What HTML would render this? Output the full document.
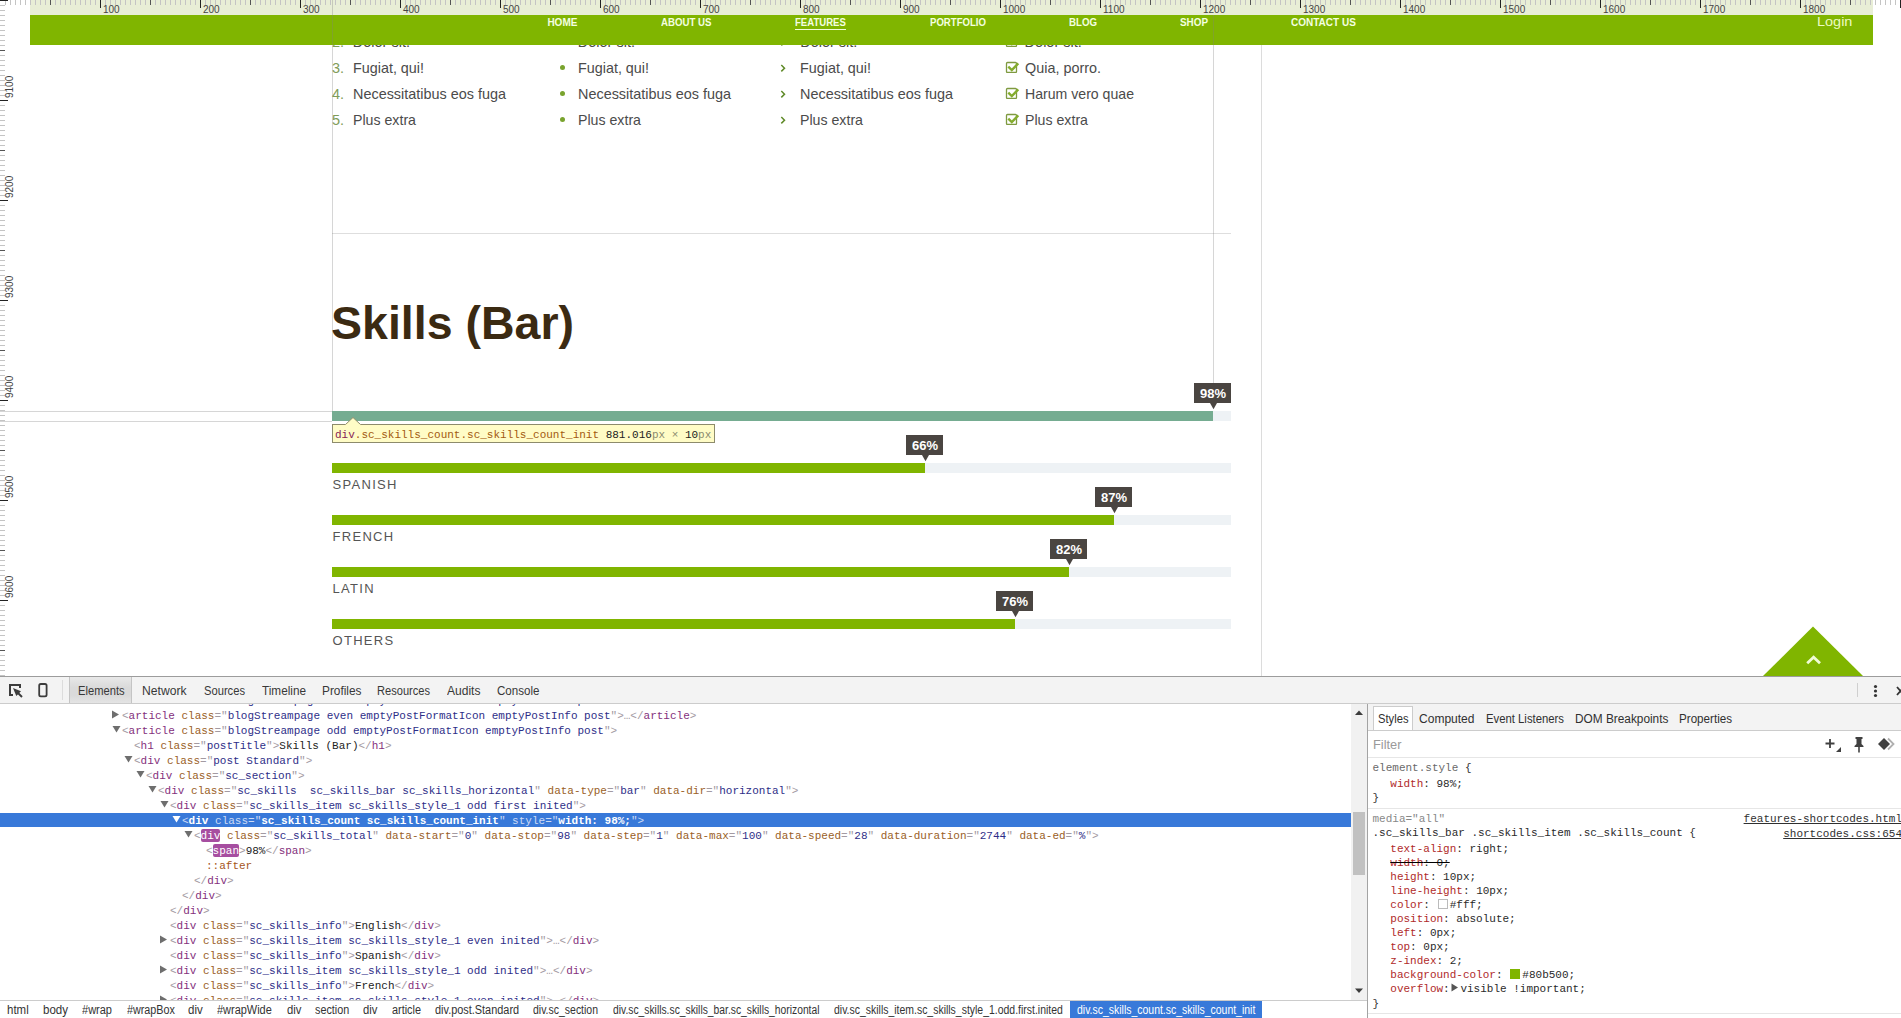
<!DOCTYPE html>
<html><head><meta charset="utf-8"><title>Skills (Bar)</title>
<style>
html,body{margin:0;padding:0}
body{width:1901px;height:1018px;overflow:hidden;position:relative;background:#fff;font-family:"Liberation Sans",sans-serif}
.t{position:absolute;white-space:pre;line-height:normal;transform-origin:0 0}
</style></head><body>
<div style="position:absolute;left:1261px;top:0px;width:1px;height:676px;background:#dcdcdc;"></div>
<div style="position:absolute;left:332px;top:233px;width:899px;height:1px;background:#dedede;"></div>
<div class="t" style="left:332.00px;top:34.00px;font:14.5px 'Liberation Sans', sans-serif;color:#7f9c58;">2.</div>
<div class="t" style="left:352.80px;top:34.00px;font:14.5px 'Liberation Sans', sans-serif;color:#4b4b4b;">Dolor sit.</div>
<div style="position:absolute;left:560px;top:38.5px;width:5px;height:5px;border-radius:50%;background:#79a32e"></div>
<div class="t" style="left:577.80px;top:34.00px;font:14.5px 'Liberation Sans', sans-serif;color:#4b4b4b;">Dolor sit.</div>
<svg style="position:absolute;left:779px;top:38px" width="8" height="10"><path d="M2.3 1 L5.5 4.2 L2.3 7.4" stroke="#5f8a28" stroke-width="1.5" fill="none"/></svg>
<div class="t" style="left:800.20px;top:34.00px;font:14.5px 'Liberation Sans', sans-serif;color:#4b4b4b;">Dolor sit.</div>
<svg style="position:absolute;left:1005px;top:35px" width="15" height="12"><rect x="1.5" y="1.5" width="10" height="10" rx="1" stroke="#7f9a40" stroke-width="1.3" fill="none"/><path d="M3.3 5.6 L6.8 9 L13.3 2.4" stroke="#84ac2e" stroke-width="2.4" fill="none"/></svg>
<div class="t" style="left:1024.60px;top:34.00px;font:14.5px 'Liberation Sans', sans-serif;color:#4b4b4b;">Dolor sit.</div>
<div class="t" style="left:332.00px;top:60.00px;font:14.5px 'Liberation Sans', sans-serif;color:#7f9c58;">3.</div>
<div class="t" style="left:352.80px;top:60.00px;font:14.5px 'Liberation Sans', sans-serif;transform:scaleX(0.9895);color:#4b4b4b;">Fugiat, qui!</div>
<div style="position:absolute;left:560px;top:64.5px;width:5px;height:5px;border-radius:50%;background:#79a32e"></div>
<div class="t" style="left:577.80px;top:60.00px;font:14.5px 'Liberation Sans', sans-serif;transform:scaleX(0.9895);color:#4b4b4b;">Fugiat, qui!</div>
<svg style="position:absolute;left:779px;top:64px" width="8" height="10"><path d="M2.3 1 L5.5 4.2 L2.3 7.4" stroke="#5f8a28" stroke-width="1.5" fill="none"/></svg>
<div class="t" style="left:800.20px;top:60.00px;font:14.5px 'Liberation Sans', sans-serif;transform:scaleX(0.9895);color:#4b4b4b;">Fugiat, qui!</div>
<svg style="position:absolute;left:1005px;top:61px" width="15" height="12"><rect x="1.5" y="1.5" width="10" height="10" rx="1" stroke="#7f9a40" stroke-width="1.3" fill="none"/><path d="M3.3 5.6 L6.8 9 L13.3 2.4" stroke="#84ac2e" stroke-width="2.4" fill="none"/></svg>
<div class="t" style="left:1024.60px;top:60.00px;font:14.5px 'Liberation Sans', sans-serif;transform:scaleX(0.9925);color:#4b4b4b;">Quia, porro.</div>
<div class="t" style="left:332.00px;top:86.00px;font:14.5px 'Liberation Sans', sans-serif;color:#7f9c58;">4.</div>
<div class="t" style="left:352.80px;top:86.00px;font:14.5px 'Liberation Sans', sans-serif;transform:scaleX(0.9938);color:#4b4b4b;">Necessitatibus eos fuga</div>
<div style="position:absolute;left:560px;top:90.5px;width:5px;height:5px;border-radius:50%;background:#79a32e"></div>
<div class="t" style="left:577.80px;top:86.00px;font:14.5px 'Liberation Sans', sans-serif;transform:scaleX(0.9938);color:#4b4b4b;">Necessitatibus eos fuga</div>
<svg style="position:absolute;left:779px;top:90px" width="8" height="10"><path d="M2.3 1 L5.5 4.2 L2.3 7.4" stroke="#5f8a28" stroke-width="1.5" fill="none"/></svg>
<div class="t" style="left:800.20px;top:86.00px;font:14.5px 'Liberation Sans', sans-serif;transform:scaleX(0.9938);color:#4b4b4b;">Necessitatibus eos fuga</div>
<svg style="position:absolute;left:1005px;top:87px" width="15" height="12"><rect x="1.5" y="1.5" width="10" height="10" rx="1" stroke="#7f9a40" stroke-width="1.3" fill="none"/><path d="M3.3 5.6 L6.8 9 L13.3 2.4" stroke="#84ac2e" stroke-width="2.4" fill="none"/></svg>
<div class="t" style="left:1024.60px;top:86.00px;font:14.5px 'Liberation Sans', sans-serif;transform:scaleX(0.9729);color:#4b4b4b;">Harum vero quae</div>
<div class="t" style="left:332.00px;top:112.00px;font:14.5px 'Liberation Sans', sans-serif;color:#7f9c58;">5.</div>
<div class="t" style="left:352.80px;top:112.00px;font:14.5px 'Liberation Sans', sans-serif;transform:scaleX(0.9770);color:#4b4b4b;">Plus extra</div>
<div style="position:absolute;left:560px;top:116.5px;width:5px;height:5px;border-radius:50%;background:#79a32e"></div>
<div class="t" style="left:577.80px;top:112.00px;font:14.5px 'Liberation Sans', sans-serif;transform:scaleX(0.9770);color:#4b4b4b;">Plus extra</div>
<svg style="position:absolute;left:779px;top:116px" width="8" height="10"><path d="M2.3 1 L5.5 4.2 L2.3 7.4" stroke="#5f8a28" stroke-width="1.5" fill="none"/></svg>
<div class="t" style="left:800.20px;top:112.00px;font:14.5px 'Liberation Sans', sans-serif;transform:scaleX(0.9770);color:#4b4b4b;">Plus extra</div>
<svg style="position:absolute;left:1005px;top:113px" width="15" height="12"><rect x="1.5" y="1.5" width="10" height="10" rx="1" stroke="#7f9a40" stroke-width="1.3" fill="none"/><path d="M3.3 5.6 L6.8 9 L13.3 2.4" stroke="#84ac2e" stroke-width="2.4" fill="none"/></svg>
<div class="t" style="left:1024.60px;top:112.00px;font:14.5px 'Liberation Sans', sans-serif;transform:scaleX(0.9770);color:#4b4b4b;">Plus extra</div>
<div class="t" style="left:331.30px;top:295.50px;font:bold 46.5px 'Liberation Sans', sans-serif;transform:scaleX(1.0003);color:#3b2a12;">Skills (Bar)</div>
<div style="position:absolute;left:332px;top:411px;width:899px;height:10px;background:#eef2f5;"></div>
<div style="position:absolute;left:332px;top:411px;width:881.02px;height:10px;background:#75ac91;"></div>
<div style="position:absolute;left:1193.52px;top:383px;width:37px;height:20px;background:#4a4541;"></div>
<svg style="position:absolute;left:1208.52px;top:403px" width="9" height="7"><path d="M1 0 L8 0 L4.5 6.3 Z" fill="#4a4541"/></svg>
<div class="t" style="left:1200.02px;top:386.00px;font:bold 13px 'Liberation Sans', sans-serif;transform:scaleX(0.9988);color:#ffffff;">98%</div>
<div style="position:absolute;left:332px;top:463px;width:899px;height:10px;background:#eef2f5;"></div>
<div style="position:absolute;left:332px;top:463px;width:593.34px;height:10px;background:#80b500;"></div>
<div style="position:absolute;left:905.84px;top:435px;width:37px;height:20px;background:#4a4541;"></div>
<svg style="position:absolute;left:920.84px;top:455px" width="9" height="7"><path d="M1 0 L8 0 L4.5 6.3 Z" fill="#4a4541"/></svg>
<div class="t" style="left:912.34px;top:438.00px;font:bold 13px 'Liberation Sans', sans-serif;transform:scaleX(0.9988);color:#ffffff;">66%</div>
<div class="t" style="left:332.50px;top:476.70px;font:13px 'Liberation Sans', sans-serif;letter-spacing:1.3px;color:#555555;">SPANISH</div>
<div style="position:absolute;left:332px;top:515px;width:899px;height:10px;background:#eef2f5;"></div>
<div style="position:absolute;left:332px;top:515px;width:782.13px;height:10px;background:#80b500;"></div>
<div style="position:absolute;left:1094.63px;top:487px;width:37px;height:20px;background:#4a4541;"></div>
<svg style="position:absolute;left:1109.63px;top:507px" width="9" height="7"><path d="M1 0 L8 0 L4.5 6.3 Z" fill="#4a4541"/></svg>
<div class="t" style="left:1101.13px;top:490.00px;font:bold 13px 'Liberation Sans', sans-serif;transform:scaleX(0.9988);color:#ffffff;">87%</div>
<div class="t" style="left:332.50px;top:528.70px;font:13px 'Liberation Sans', sans-serif;letter-spacing:1.3px;color:#555555;">FRENCH</div>
<div style="position:absolute;left:332px;top:567px;width:899px;height:10px;background:#eef2f5;"></div>
<div style="position:absolute;left:332px;top:567px;width:737.18px;height:10px;background:#80b500;"></div>
<div style="position:absolute;left:1049.6799999999998px;top:539px;width:37px;height:20px;background:#4a4541;"></div>
<svg style="position:absolute;left:1064.6799999999998px;top:559px" width="9" height="7"><path d="M1 0 L8 0 L4.5 6.3 Z" fill="#4a4541"/></svg>
<div class="t" style="left:1056.18px;top:542.00px;font:bold 13px 'Liberation Sans', sans-serif;transform:scaleX(0.9988);color:#ffffff;">82%</div>
<div class="t" style="left:332.50px;top:580.70px;font:13px 'Liberation Sans', sans-serif;letter-spacing:1.3px;color:#555555;">LATIN</div>
<div style="position:absolute;left:332px;top:619px;width:899px;height:10px;background:#eef2f5;"></div>
<div style="position:absolute;left:332px;top:619px;width:683.24px;height:10px;background:#80b500;"></div>
<div style="position:absolute;left:995.74px;top:591px;width:37px;height:20px;background:#4a4541;"></div>
<svg style="position:absolute;left:1010.74px;top:611px" width="9" height="7"><path d="M1 0 L8 0 L4.5 6.3 Z" fill="#4a4541"/></svg>
<div class="t" style="left:1002.24px;top:594.00px;font:bold 13px 'Liberation Sans', sans-serif;transform:scaleX(0.9988);color:#ffffff;">76%</div>
<div class="t" style="left:332.50px;top:632.70px;font:13px 'Liberation Sans', sans-serif;letter-spacing:1.3px;color:#555555;">OTHERS</div>
<svg style="position:absolute;left:1763px;top:626px" width="100" height="50"><path d="M0 50 L50 0.5 L100 50 Z" fill="#80b500"/><path d="M44.2 37.2 L50.6 31.2 L57 37.2" stroke="#f0fcd6" stroke-width="2.8" fill="none"/></svg>
<div style="position:absolute;left:30px;top:0px;width:1843px;height:45px;background:#80b500;"></div>
<div class="t" style="left:547.40px;top:17.00px;font:bold 10px 'Liberation Sans', sans-serif;transform:scaleX(1.0000);color:#f4ffe0;">HOME</div>
<div class="t" style="left:661.00px;top:17.00px;font:bold 10px 'Liberation Sans', sans-serif;transform:scaleX(0.9668);color:#f4ffe0;">ABOUT US</div>
<div class="t" style="left:795.30px;top:17.00px;font:bold 10px 'Liberation Sans', sans-serif;transform:scaleX(0.9557);color:#f4ffe0;">FEATURES</div>
<div class="t" style="left:929.80px;top:17.00px;font:bold 10px 'Liberation Sans', sans-serif;transform:scaleX(0.9598);color:#f4ffe0;">PORTFOLIO</div>
<div class="t" style="left:1069.00px;top:17.00px;font:bold 10px 'Liberation Sans', sans-serif;transform:scaleX(0.9692);color:#f4ffe0;">BLOG</div>
<div class="t" style="left:1180.00px;top:17.00px;font:bold 10px 'Liberation Sans', sans-serif;transform:scaleX(0.9879);color:#f4ffe0;">SHOP</div>
<div class="t" style="left:1291.00px;top:17.00px;font:bold 10px 'Liberation Sans', sans-serif;transform:scaleX(0.9998);color:#f4ffe0;">CONTACT US</div>
<div style="position:absolute;left:795.3px;top:29px;width:50.8px;height:1px;background:#f0fcd8;"></div>
<div class="t" style="left:1816.80px;top:13.80px;font:13px 'Liberation Sans', sans-serif;transform:scaleX(1.1128);color:#ecfbc0;">Login</div>
<div style="position:absolute;left:30px;top:0px;width:1843px;height:15px;background:#e8eed6;"></div>
<svg width="1901" height="676" style="position:absolute;left:0;top:0"><path d="M5.5 0v5M10.5 0v5M15.5 0v5M20.5 0v5M25.5 0v5M30.5 0v5M35.5 0v5M40.5 0v5M45.5 0v5M55.5 0v5M60.5 0v5M65.5 0v5M70.5 0v5M75.5 0v5M80.5 0v5M85.5 0v5M90.5 0v5M95.5 0v5M105.5 0v5M110.5 0v5M115.5 0v5M120.5 0v5M125.5 0v5M130.5 0v5M135.5 0v5M140.5 0v5M145.5 0v5M155.5 0v5M160.5 0v5M165.5 0v5M170.5 0v5M175.5 0v5M180.5 0v5M185.5 0v5M190.5 0v5M195.5 0v5M205.5 0v5M210.5 0v5M215.5 0v5M220.5 0v5M225.5 0v5M230.5 0v5M235.5 0v5M240.5 0v5M245.5 0v5M255.5 0v5M260.5 0v5M265.5 0v5M270.5 0v5M275.5 0v5M280.5 0v5M285.5 0v5M290.5 0v5M295.5 0v5M305.5 0v5M310.5 0v5M315.5 0v5M320.5 0v5M325.5 0v5M330.5 0v5M335.5 0v5M340.5 0v5M345.5 0v5M355.5 0v5M360.5 0v5M365.5 0v5M370.5 0v5M375.5 0v5M380.5 0v5M385.5 0v5M390.5 0v5M395.5 0v5M405.5 0v5M410.5 0v5M415.5 0v5M420.5 0v5M425.5 0v5M430.5 0v5M435.5 0v5M440.5 0v5M445.5 0v5M455.5 0v5M460.5 0v5M465.5 0v5M470.5 0v5M475.5 0v5M480.5 0v5M485.5 0v5M490.5 0v5M495.5 0v5M505.5 0v5M510.5 0v5M515.5 0v5M520.5 0v5M525.5 0v5M530.5 0v5M535.5 0v5M540.5 0v5M545.5 0v5M555.5 0v5M560.5 0v5M565.5 0v5M570.5 0v5M575.5 0v5M580.5 0v5M585.5 0v5M590.5 0v5M595.5 0v5M605.5 0v5M610.5 0v5M615.5 0v5M620.5 0v5M625.5 0v5M630.5 0v5M635.5 0v5M640.5 0v5M645.5 0v5M655.5 0v5M660.5 0v5M665.5 0v5M670.5 0v5M675.5 0v5M680.5 0v5M685.5 0v5M690.5 0v5M695.5 0v5M705.5 0v5M710.5 0v5M715.5 0v5M720.5 0v5M725.5 0v5M730.5 0v5M735.5 0v5M740.5 0v5M745.5 0v5M755.5 0v5M760.5 0v5M765.5 0v5M770.5 0v5M775.5 0v5M780.5 0v5M785.5 0v5M790.5 0v5M795.5 0v5M805.5 0v5M810.5 0v5M815.5 0v5M820.5 0v5M825.5 0v5M830.5 0v5M835.5 0v5M840.5 0v5M845.5 0v5M855.5 0v5M860.5 0v5M865.5 0v5M870.5 0v5M875.5 0v5M880.5 0v5M885.5 0v5M890.5 0v5M895.5 0v5M905.5 0v5M910.5 0v5M915.5 0v5M920.5 0v5M925.5 0v5M930.5 0v5M935.5 0v5M940.5 0v5M945.5 0v5M955.5 0v5M960.5 0v5M965.5 0v5M970.5 0v5M975.5 0v5M980.5 0v5M985.5 0v5M990.5 0v5M995.5 0v5M1005.5 0v5M1010.5 0v5M1015.5 0v5M1020.5 0v5M1025.5 0v5M1030.5 0v5M1035.5 0v5M1040.5 0v5M1045.5 0v5M1055.5 0v5M1060.5 0v5M1065.5 0v5M1070.5 0v5M1075.5 0v5M1080.5 0v5M1085.5 0v5M1090.5 0v5M1095.5 0v5M1105.5 0v5M1110.5 0v5M1115.5 0v5M1120.5 0v5M1125.5 0v5M1130.5 0v5M1135.5 0v5M1140.5 0v5M1145.5 0v5M1155.5 0v5M1160.5 0v5M1165.5 0v5M1170.5 0v5M1175.5 0v5M1180.5 0v5M1185.5 0v5M1190.5 0v5M1195.5 0v5M1205.5 0v5M1210.5 0v5M1215.5 0v5M1220.5 0v5M1225.5 0v5M1230.5 0v5M1235.5 0v5M1240.5 0v5M1245.5 0v5M1255.5 0v5M1260.5 0v5M1265.5 0v5M1270.5 0v5M1275.5 0v5M1280.5 0v5M1285.5 0v5M1290.5 0v5M1295.5 0v5M1305.5 0v5M1310.5 0v5M1315.5 0v5M1320.5 0v5M1325.5 0v5M1330.5 0v5M1335.5 0v5M1340.5 0v5M1345.5 0v5M1355.5 0v5M1360.5 0v5M1365.5 0v5M1370.5 0v5M1375.5 0v5M1380.5 0v5M1385.5 0v5M1390.5 0v5M1395.5 0v5M1405.5 0v5M1410.5 0v5M1415.5 0v5M1420.5 0v5M1425.5 0v5M1430.5 0v5M1435.5 0v5M1440.5 0v5M1445.5 0v5M1455.5 0v5M1460.5 0v5M1465.5 0v5M1470.5 0v5M1475.5 0v5M1480.5 0v5M1485.5 0v5M1490.5 0v5M1495.5 0v5M1505.5 0v5M1510.5 0v5M1515.5 0v5M1520.5 0v5M1525.5 0v5M1530.5 0v5M1535.5 0v5M1540.5 0v5M1545.5 0v5M1555.5 0v5M1560.5 0v5M1565.5 0v5M1570.5 0v5M1575.5 0v5M1580.5 0v5M1585.5 0v5M1590.5 0v5M1595.5 0v5M1605.5 0v5M1610.5 0v5M1615.5 0v5M1620.5 0v5M1625.5 0v5M1630.5 0v5M1635.5 0v5M1640.5 0v5M1645.5 0v5M1655.5 0v5M1660.5 0v5M1665.5 0v5M1670.5 0v5M1675.5 0v5M1680.5 0v5M1685.5 0v5M1690.5 0v5M1695.5 0v5M1705.5 0v5M1710.5 0v5M1715.5 0v5M1720.5 0v5M1725.5 0v5M1730.5 0v5M1735.5 0v5M1740.5 0v5M1745.5 0v5M1755.5 0v5M1760.5 0v5M1765.5 0v5M1770.5 0v5M1775.5 0v5M1780.5 0v5M1785.5 0v5M1790.5 0v5M1795.5 0v5M1805.5 0v5M1810.5 0v5M1815.5 0v5M1820.5 0v5M1825.5 0v5M1830.5 0v5M1835.5 0v5M1840.5 0v5M1845.5 0v5M1855.5 0v5M1860.5 0v5M1865.5 0v5M1870.5 0v5M1875.5 0v5M1880.5 0v5M1885.5 0v5M1890.5 0v5M1895.5 0v5M0 5.5h5M0 10.5h5M0 15.5h5M0 20.5h5M0 25.5h5M0 30.5h5M0 35.5h5M0 40.5h5M0 45.5h5M0 55.5h5M0 60.5h5M0 65.5h5M0 70.5h5M0 75.5h5M0 80.5h5M0 85.5h5M0 90.5h5M0 95.5h5M0 105.5h5M0 110.5h5M0 115.5h5M0 120.5h5M0 125.5h5M0 130.5h5M0 135.5h5M0 140.5h5M0 145.5h5M0 155.5h5M0 160.5h5M0 165.5h5M0 170.5h5M0 175.5h5M0 180.5h5M0 185.5h5M0 190.5h5M0 195.5h5M0 205.5h5M0 210.5h5M0 215.5h5M0 220.5h5M0 225.5h5M0 230.5h5M0 235.5h5M0 240.5h5M0 245.5h5M0 255.5h5M0 260.5h5M0 265.5h5M0 270.5h5M0 275.5h5M0 280.5h5M0 285.5h5M0 290.5h5M0 295.5h5M0 305.5h5M0 310.5h5M0 315.5h5M0 320.5h5M0 325.5h5M0 330.5h5M0 335.5h5M0 340.5h5M0 345.5h5M0 355.5h5M0 360.5h5M0 365.5h5M0 370.5h5M0 375.5h5M0 380.5h5M0 385.5h5M0 390.5h5M0 395.5h5M0 405.5h5M0 410.5h5M0 415.5h5M0 420.5h5M0 425.5h5M0 430.5h5M0 435.5h5M0 440.5h5M0 445.5h5M0 455.5h5M0 460.5h5M0 465.5h5M0 470.5h5M0 475.5h5M0 480.5h5M0 485.5h5M0 490.5h5M0 495.5h5M0 505.5h5M0 510.5h5M0 515.5h5M0 520.5h5M0 525.5h5M0 530.5h5M0 535.5h5M0 540.5h5M0 545.5h5M0 555.5h5M0 560.5h5M0 565.5h5M0 570.5h5M0 575.5h5M0 580.5h5M0 585.5h5M0 590.5h5M0 595.5h5M0 605.5h5M0 610.5h5M0 615.5h5M0 620.5h5M0 625.5h5M0 630.5h5M0 635.5h5M0 640.5h5M0 645.5h5M0 655.5h5M0 660.5h5M0 665.5h5M0 670.5h5M0 675.5h5" stroke="#c4c4c4" stroke-width="1"/><path d="M50.5 0v5M150.5 0v5M250.5 0v5M350.5 0v5M450.5 0v5M550.5 0v5M650.5 0v5M750.5 0v5M850.5 0v5M950.5 0v5M1050.5 0v5M1150.5 0v5M1250.5 0v5M1350.5 0v5M1450.5 0v5M1550.5 0v5M1650.5 0v5M1750.5 0v5M1850.5 0v5M0 50.5h5M0 150.5h5M0 250.5h5M0 350.5h5M0 450.5h5M0 550.5h5M0 650.5h5" stroke="#555" stroke-width="1"/><path d="M100.5 0v8M200.5 0v8M300.5 0v8M400.5 0v8M500.5 0v8M600.5 0v8M700.5 0v8M800.5 0v8M900.5 0v8M1000.5 0v8M1100.5 0v8M1200.5 0v8M1300.5 0v8M1400.5 0v8M1500.5 0v8M1600.5 0v8M1700.5 0v8M1800.5 0v8M1900.5 0v8M0 0.5h8M0 100.5h8M0 200.5h8M0 300.5h8M0 400.5h8M0 500.5h8M0 600.5h8" stroke="#222" stroke-width="1"/><g style="font-family:'Liberation Sans',sans-serif;font-size:10px" fill="#444"><text x="103" y="13.3">100</text><text x="203" y="13.3">200</text><text x="303" y="13.3">300</text><text x="403" y="13.3">400</text><text x="503" y="13.3">500</text><text x="603" y="13.3">600</text><text x="703" y="13.3">700</text><text x="803" y="13.3">800</text><text x="903" y="13.3">900</text><text x="1003" y="13.3">1000</text><text x="1103" y="13.3">1100</text><text x="1203" y="13.3">1200</text><text x="1303" y="13.3">1300</text><text x="1403" y="13.3">1400</text><text x="1503" y="13.3">1500</text><text x="1603" y="13.3">1600</text><text x="1703" y="13.3">1700</text><text x="1803" y="13.3">1800</text><text x="1903" y="13.3">1900</text><text transform="translate(13,98) rotate(-90)">9100</text><text transform="translate(13,198) rotate(-90)">9200</text><text transform="translate(13,298) rotate(-90)">9300</text><text transform="translate(13,398) rotate(-90)">9400</text><text transform="translate(13,498) rotate(-90)">9500</text><text transform="translate(13,598) rotate(-90)">9600</text></g></svg>
<div style="position:absolute;left:332px;top:0px;width:1px;height:411px;background:rgba(128,128,128,0.32);"></div>
<div style="position:absolute;left:1213px;top:15px;width:1px;height:368px;background:rgba(128,128,128,0.32);"></div>
<div style="position:absolute;left:0px;top:411px;width:332px;height:1px;background:rgba(128,128,128,0.32);"></div>
<div style="position:absolute;left:0px;top:421px;width:332px;height:1px;background:rgba(128,128,128,0.32);"></div>
<div style="position:absolute;left:332px;top:424px;width:381px;height:17px;background:#fffcc6;border:1px solid #8d8b6c"></div>
<svg style="position:absolute;left:345px;top:416px" width="16" height="10"><path d="M0 9 L8 1.5 L16 9" fill="#fffcc6" stroke="#8d8b6c" stroke-width="1"/><rect x="0.5" y="8.5" width="15" height="2" fill="#fffcc6"/></svg>
<div class="t" style="left:335.00px;top:428.50px;font:11px 'Liberation Mono', monospace;"><span style="color:#882255">div</span><span style="color:#a25a10">.sc_skills_count.sc_skills_count_init</span><span style="color:#222"> 881.016</span><span style="color:#8a8a6e">px</span><span style="color:#8a8a6e"> × </span><span style="color:#222">10</span><span style="color:#8a8a6e">px</span></div>
<div style="position:absolute;left:0px;top:676px;width:1901px;height:342px;background:#ffffff;"></div>
<div style="position:absolute;left:0px;top:676px;width:1901px;height:1px;background:#9c9c9c;"></div>
<div style="position:absolute;left:0px;top:677px;width:1901px;height:26px;background:#f3f3f3;"></div>
<div style="position:absolute;left:0px;top:703px;width:1901px;height:1px;background:#cccccc;"></div>
<svg style="position:absolute;left:8px;top:683px" width="18" height="17"><path d="M12 5 V2 H2 V12 H5" stroke="#3c3c3c" stroke-width="2" fill="none"/><path d="M5 5 L13 8.3 L8.3 13 Z" fill="#3c3c3c"/><path d="M9.5 9.5 L14 14" stroke="#3c3c3c" stroke-width="1.9"/></svg>
<svg style="position:absolute;left:37px;top:682px" width="12" height="16"><rect x="2.2" y="2" width="7.4" height="12.4" rx="1.6" stroke="#3c3c3c" stroke-width="1.8" fill="none"/></svg>
<div style="position:absolute;left:62px;top:680px;width:1px;height:20px;background:#dcdcdc;"></div>
<div style="position:absolute;left:69px;top:677px;width:63px;height:26px;background:linear-gradient(#e8e8e8,#dadada 40%,#dadada 70%,#e4e4e4);border-left:1px solid #c4c4c4;border-right:1px solid #c4c4c4;box-sizing:border-box"></div>
<div class="t" style="left:77.80px;top:684.00px;font:12px 'Liberation Sans', sans-serif;transform:scaleX(0.9314);color:#383838;">Elements</div>
<div class="t" style="left:141.50px;top:684.00px;font:12px 'Liberation Sans', sans-serif;transform:scaleX(1.0110);color:#383838;">Network</div>
<div class="t" style="left:203.50px;top:684.00px;font:12px 'Liberation Sans', sans-serif;transform:scaleX(0.9312);color:#383838;">Sources</div>
<div class="t" style="left:262.00px;top:684.00px;font:12px 'Liberation Sans', sans-serif;transform:scaleX(0.9798);color:#383838;">Timeline</div>
<div class="t" style="left:322.00px;top:684.00px;font:12px 'Liberation Sans', sans-serif;transform:scaleX(0.9871);color:#383838;">Profiles</div>
<div class="t" style="left:377.00px;top:684.00px;font:12px 'Liberation Sans', sans-serif;transform:scaleX(0.9240);color:#383838;">Resources</div>
<div class="t" style="left:447.00px;top:684.00px;font:12px 'Liberation Sans', sans-serif;transform:scaleX(1.0042);color:#383838;">Audits</div>
<div class="t" style="left:497.00px;top:684.00px;font:12px 'Liberation Sans', sans-serif;transform:scaleX(0.9652);color:#383838;">Console</div>
<div style="position:absolute;left:1857px;top:683px;width:1px;height:14px;background:#cfcfcf;"></div>
<svg style="position:absolute;left:1872px;top:684px" width="8" height="14"><circle cx="3.5" cy="2.5" r="1.6" fill="#333"/><circle cx="3.5" cy="7" r="1.6" fill="#333"/><circle cx="3.5" cy="11.5" r="1.6" fill="#333"/></svg>
<svg style="position:absolute;left:1895px;top:685px" width="10" height="12"><path d="M2 2 L9 10 M9 2 L2 10" stroke="#333" stroke-width="1.8"/></svg>
<div style="position:absolute;left:0;top:704px;width:1351px;height:296px;overflow:hidden">
<div style="position:absolute;left:0px;top:109px;width:1351px;height:14px;background:#3879d9;"></div>
<svg style="position:absolute;left:112px;top:-9px" width="8" height="9"><path d="M0 0.5 L7 4.5 L0 8.5Z" fill="#6e6e6e"/></svg>
<div class="t" style="left:122.00px;top:-9.00px;font:11px 'Liberation Mono', monospace;"><span style="color:#a39aa2">&lt;</span><span style="color:#84307c">article</span><span style="color:#a39aa2"> </span><span style="color:#9a6026">class</span><span style="color:#a39aa2">=&quot;</span><span style="color:#2e2e88">blogStreampage odd emptyPostFormatIcon emptyPostInfo post</span><span style="color:#a39aa2">&quot;</span><span style="color:#a39aa2">&gt;</span><span style="color:#a39aa2">…</span><span style="color:#a39aa2">&lt;/</span><span style="color:#84307c">article</span><span style="color:#a39aa2">&gt;</span></div>
<svg style="position:absolute;left:112px;top:6px" width="8" height="9"><path d="M0 0.5 L7 4.5 L0 8.5Z" fill="#6e6e6e"/></svg>
<div class="t" style="left:122.00px;top:6.00px;font:11px 'Liberation Mono', monospace;"><span style="color:#a39aa2">&lt;</span><span style="color:#84307c">article</span><span style="color:#a39aa2"> </span><span style="color:#9a6026">class</span><span style="color:#a39aa2">=&quot;</span><span style="color:#2e2e88">blogStreampage even emptyPostFormatIcon emptyPostInfo post</span><span style="color:#a39aa2">&quot;</span><span style="color:#a39aa2">&gt;</span><span style="color:#a39aa2">…</span><span style="color:#a39aa2">&lt;/</span><span style="color:#84307c">article</span><span style="color:#a39aa2">&gt;</span></div>
<svg style="position:absolute;left:111.5px;top:22px" width="9" height="7"><path d="M0.5 0 L8.5 0 L4.5 6.5Z" fill="#6e6e6e"/></svg>
<div class="t" style="left:122.00px;top:21.00px;font:11px 'Liberation Mono', monospace;"><span style="color:#a39aa2">&lt;</span><span style="color:#84307c">article</span><span style="color:#a39aa2"> </span><span style="color:#9a6026">class</span><span style="color:#a39aa2">=&quot;</span><span style="color:#2e2e88">blogStreampage odd emptyPostFormatIcon emptyPostInfo post</span><span style="color:#a39aa2">&quot;</span><span style="color:#a39aa2">&gt;</span></div>
<div class="t" style="left:134.00px;top:36.00px;font:11px 'Liberation Mono', monospace;"><span style="color:#a39aa2">&lt;</span><span style="color:#84307c">h1</span><span style="color:#a39aa2"> </span><span style="color:#9a6026">class</span><span style="color:#a39aa2">=&quot;</span><span style="color:#2e2e88">postTitle</span><span style="color:#a39aa2">&quot;</span><span style="color:#a39aa2">&gt;</span><span style="color:#222222">Skills (Bar)</span><span style="color:#a39aa2">&lt;/</span><span style="color:#84307c">h1</span><span style="color:#a39aa2">&gt;</span></div>
<svg style="position:absolute;left:123.5px;top:52px" width="9" height="7"><path d="M0.5 0 L8.5 0 L4.5 6.5Z" fill="#6e6e6e"/></svg>
<div class="t" style="left:134.00px;top:51.00px;font:11px 'Liberation Mono', monospace;"><span style="color:#a39aa2">&lt;</span><span style="color:#84307c">div</span><span style="color:#a39aa2"> </span><span style="color:#9a6026">class</span><span style="color:#a39aa2">=&quot;</span><span style="color:#2e2e88">post Standard</span><span style="color:#a39aa2">&quot;</span><span style="color:#a39aa2">&gt;</span></div>
<svg style="position:absolute;left:135.5px;top:67px" width="9" height="7"><path d="M0.5 0 L8.5 0 L4.5 6.5Z" fill="#6e6e6e"/></svg>
<div class="t" style="left:146.00px;top:66.00px;font:11px 'Liberation Mono', monospace;"><span style="color:#a39aa2">&lt;</span><span style="color:#84307c">div</span><span style="color:#a39aa2"> </span><span style="color:#9a6026">class</span><span style="color:#a39aa2">=&quot;</span><span style="color:#2e2e88">sc_section</span><span style="color:#a39aa2">&quot;</span><span style="color:#a39aa2">&gt;</span></div>
<svg style="position:absolute;left:147.5px;top:82px" width="9" height="7"><path d="M0.5 0 L8.5 0 L4.5 6.5Z" fill="#6e6e6e"/></svg>
<div class="t" style="left:158.00px;top:81.00px;font:11px 'Liberation Mono', monospace;"><span style="color:#a39aa2">&lt;</span><span style="color:#84307c">div</span><span style="color:#a39aa2"> </span><span style="color:#9a6026">class</span><span style="color:#a39aa2">=&quot;</span><span style="color:#2e2e88">sc_skills  sc_skills_bar sc_skills_horizontal</span><span style="color:#a39aa2">&quot;</span><span style="color:#a39aa2"> </span><span style="color:#9a6026">data-type</span><span style="color:#a39aa2">=&quot;</span><span style="color:#2e2e88">bar</span><span style="color:#a39aa2">&quot;</span><span style="color:#a39aa2"> </span><span style="color:#9a6026">data-dir</span><span style="color:#a39aa2">=&quot;</span><span style="color:#2e2e88">horizontal</span><span style="color:#a39aa2">&quot;</span><span style="color:#a39aa2">&gt;</span></div>
<svg style="position:absolute;left:159.5px;top:97px" width="9" height="7"><path d="M0.5 0 L8.5 0 L4.5 6.5Z" fill="#6e6e6e"/></svg>
<div class="t" style="left:170.00px;top:96.00px;font:11px 'Liberation Mono', monospace;"><span style="color:#a39aa2">&lt;</span><span style="color:#84307c">div</span><span style="color:#a39aa2"> </span><span style="color:#9a6026">class</span><span style="color:#a39aa2">=&quot;</span><span style="color:#2e2e88">sc_skills_item sc_skills_style_1 odd first inited</span><span style="color:#a39aa2">&quot;</span><span style="color:#a39aa2">&gt;</span></div>
<svg style="position:absolute;left:171.5px;top:112px" width="9" height="7"><path d="M0.5 0 L8.5 0 L4.5 6.5Z" fill="#ffffff"/></svg>
<div class="t" style="left:182.00px;top:111.00px;font:11px 'Liberation Mono', monospace;"><span style="color:#cddbf5">&lt;</span><span style="color:#ffffff;font-weight:bold">div</span><span style="color:#cddbf5"> </span><span style="color:#cddbf5">class</span><span style="color:#cddbf5">=&quot;</span><span style="color:#ffffff;font-weight:bold">sc_skills_count sc_skills_count_init</span><span style="color:#cddbf5">&quot;</span><span style="color:#cddbf5"> </span><span style="color:#cddbf5">style</span><span style="color:#cddbf5">=&quot;</span><span style="color:#ffffff;font-weight:bold">width: 98%;</span><span style="color:#cddbf5">&quot;</span><span style="color:#cddbf5">&gt;</span></div>
<div style="position:absolute;left:201.2px;top:124.5px;width:19px;height:13.5px;background:#a64ea0;border-radius:2px"></div>
<svg style="position:absolute;left:183.5px;top:127px" width="9" height="7"><path d="M0.5 0 L8.5 0 L4.5 6.5Z" fill="#6e6e6e"/></svg>
<div class="t" style="left:194.00px;top:126.00px;font:11px 'Liberation Mono', monospace;"><span style="color:#a39aa2">&lt;</span><span style="color:#ffffff">div</span><span style="color:#a39aa2"> </span><span style="color:#9a6026">class</span><span style="color:#a39aa2">=&quot;</span><span style="color:#2e2e88">sc_skills_total</span><span style="color:#a39aa2">&quot;</span><span style="color:#a39aa2"> </span><span style="color:#9a6026">data-start</span><span style="color:#a39aa2">=&quot;</span><span style="color:#2e2e88">0</span><span style="color:#a39aa2">&quot;</span><span style="color:#a39aa2"> </span><span style="color:#9a6026">data-stop</span><span style="color:#a39aa2">=&quot;</span><span style="color:#2e2e88">98</span><span style="color:#a39aa2">&quot;</span><span style="color:#a39aa2"> </span><span style="color:#9a6026">data-step</span><span style="color:#a39aa2">=&quot;</span><span style="color:#2e2e88">1</span><span style="color:#a39aa2">&quot;</span><span style="color:#a39aa2"> </span><span style="color:#9a6026">data-max</span><span style="color:#a39aa2">=&quot;</span><span style="color:#2e2e88">100</span><span style="color:#a39aa2">&quot;</span><span style="color:#a39aa2"> </span><span style="color:#9a6026">data-speed</span><span style="color:#a39aa2">=&quot;</span><span style="color:#2e2e88">28</span><span style="color:#a39aa2">&quot;</span><span style="color:#a39aa2"> </span><span style="color:#9a6026">data-duration</span><span style="color:#a39aa2">=&quot;</span><span style="color:#2e2e88">2744</span><span style="color:#a39aa2">&quot;</span><span style="color:#a39aa2"> </span><span style="color:#9a6026">data-ed</span><span style="color:#a39aa2">=&quot;</span><span style="color:#2e2e88">%</span><span style="color:#a39aa2">&quot;</span><span style="color:#a39aa2">&gt;</span></div>
<div style="position:absolute;left:213.2px;top:139.5px;width:25.8px;height:13.5px;background:#a64ea0;border-radius:2px"></div>
<div class="t" style="left:206.00px;top:141.00px;font:11px 'Liberation Mono', monospace;"><span style="color:#a39aa2">&lt;</span><span style="color:#ffffff">span</span><span style="color:#a39aa2">&gt;</span><span style="color:#222222">98%</span><span style="color:#a39aa2">&lt;/</span><span style="color:#84307c">span</span><span style="color:#a39aa2">&gt;</span></div>
<div class="t" style="left:206.00px;top:156.00px;font:11px 'Liberation Mono', monospace;color:#a5561b;">::after</div>
<div class="t" style="left:194.00px;top:171.00px;font:11px 'Liberation Mono', monospace;"><span style="color:#a39aa2">&lt;/</span><span style="color:#84307c">div</span><span style="color:#a39aa2">&gt;</span></div>
<div class="t" style="left:182.00px;top:186.00px;font:11px 'Liberation Mono', monospace;"><span style="color:#a39aa2">&lt;/</span><span style="color:#84307c">div</span><span style="color:#a39aa2">&gt;</span></div>
<div class="t" style="left:170.00px;top:201.00px;font:11px 'Liberation Mono', monospace;"><span style="color:#a39aa2">&lt;/</span><span style="color:#84307c">div</span><span style="color:#a39aa2">&gt;</span></div>
<div class="t" style="left:170.00px;top:216.00px;font:11px 'Liberation Mono', monospace;"><span style="color:#a39aa2">&lt;</span><span style="color:#84307c">div</span><span style="color:#a39aa2"> </span><span style="color:#9a6026">class</span><span style="color:#a39aa2">=&quot;</span><span style="color:#2e2e88">sc_skills_info</span><span style="color:#a39aa2">&quot;</span><span style="color:#a39aa2">&gt;</span><span style="color:#222222">English</span><span style="color:#a39aa2">&lt;/</span><span style="color:#84307c">div</span><span style="color:#a39aa2">&gt;</span></div>
<svg style="position:absolute;left:160px;top:231px" width="8" height="9"><path d="M0 0.5 L7 4.5 L0 8.5Z" fill="#6e6e6e"/></svg>
<div class="t" style="left:170.00px;top:231.00px;font:11px 'Liberation Mono', monospace;"><span style="color:#a39aa2">&lt;</span><span style="color:#84307c">div</span><span style="color:#a39aa2"> </span><span style="color:#9a6026">class</span><span style="color:#a39aa2">=&quot;</span><span style="color:#2e2e88">sc_skills_item sc_skills_style_1 even inited</span><span style="color:#a39aa2">&quot;</span><span style="color:#a39aa2">&gt;</span><span style="color:#a39aa2">…</span><span style="color:#a39aa2">&lt;/</span><span style="color:#84307c">div</span><span style="color:#a39aa2">&gt;</span></div>
<div class="t" style="left:170.00px;top:246.00px;font:11px 'Liberation Mono', monospace;"><span style="color:#a39aa2">&lt;</span><span style="color:#84307c">div</span><span style="color:#a39aa2"> </span><span style="color:#9a6026">class</span><span style="color:#a39aa2">=&quot;</span><span style="color:#2e2e88">sc_skills_info</span><span style="color:#a39aa2">&quot;</span><span style="color:#a39aa2">&gt;</span><span style="color:#222222">Spanish</span><span style="color:#a39aa2">&lt;/</span><span style="color:#84307c">div</span><span style="color:#a39aa2">&gt;</span></div>
<svg style="position:absolute;left:160px;top:261px" width="8" height="9"><path d="M0 0.5 L7 4.5 L0 8.5Z" fill="#6e6e6e"/></svg>
<div class="t" style="left:170.00px;top:261.00px;font:11px 'Liberation Mono', monospace;"><span style="color:#a39aa2">&lt;</span><span style="color:#84307c">div</span><span style="color:#a39aa2"> </span><span style="color:#9a6026">class</span><span style="color:#a39aa2">=&quot;</span><span style="color:#2e2e88">sc_skills_item sc_skills_style_1 odd inited</span><span style="color:#a39aa2">&quot;</span><span style="color:#a39aa2">&gt;</span><span style="color:#a39aa2">…</span><span style="color:#a39aa2">&lt;/</span><span style="color:#84307c">div</span><span style="color:#a39aa2">&gt;</span></div>
<div class="t" style="left:170.00px;top:276.00px;font:11px 'Liberation Mono', monospace;"><span style="color:#a39aa2">&lt;</span><span style="color:#84307c">div</span><span style="color:#a39aa2"> </span><span style="color:#9a6026">class</span><span style="color:#a39aa2">=&quot;</span><span style="color:#2e2e88">sc_skills_info</span><span style="color:#a39aa2">&quot;</span><span style="color:#a39aa2">&gt;</span><span style="color:#222222">French</span><span style="color:#a39aa2">&lt;/</span><span style="color:#84307c">div</span><span style="color:#a39aa2">&gt;</span></div>
<svg style="position:absolute;left:160px;top:291px" width="8" height="9"><path d="M0 0.5 L7 4.5 L0 8.5Z" fill="#6e6e6e"/></svg>
<div class="t" style="left:170.00px;top:291.00px;font:11px 'Liberation Mono', monospace;"><span style="color:#a39aa2">&lt;</span><span style="color:#84307c">div</span><span style="color:#a39aa2"> </span><span style="color:#9a6026">class</span><span style="color:#a39aa2">=&quot;</span><span style="color:#2e2e88">sc_skills_item sc_skills_style_1 even inited</span><span style="color:#a39aa2">&quot;</span><span style="color:#a39aa2">&gt;</span><span style="color:#a39aa2">…</span><span style="color:#a39aa2">&lt;/</span><span style="color:#84307c">div</span><span style="color:#a39aa2">&gt;</span></div>
</div>
<div style="position:absolute;left:1351px;top:704px;width:16px;height:296px;background:#f1f1f1;"></div>
<svg style="position:absolute;left:1354px;top:709px" width="10" height="8"><path d="M1 6 L5 1.5 L9 6Z" fill="#3c3c3c"/></svg>
<svg style="position:absolute;left:1354px;top:987px" width="10" height="8"><path d="M1 1.5 L5 6 L9 1.5Z" fill="#3c3c3c"/></svg>
<div style="position:absolute;left:1353px;top:812px;width:12px;height:63px;background:#c1c1c1;"></div>
<div style="position:absolute;left:1367px;top:704px;width:1px;height:314px;background:#a3a3a3;"></div>
<div style="position:absolute;left:0px;top:1000px;width:1367px;height:1px;background:#cccccc;"></div>
<div style="position:absolute;left:0px;top:1001px;width:1367px;height:17px;background:#ffffff;"></div>
<div style="position:absolute;left:1070px;top:1001px;width:191.5px;height:17px;background:#3879d9;"></div>
<div class="t" style="left:7.00px;top:1003.00px;font:12px 'Liberation Sans', sans-serif;transform:scaleX(0.9571);color:#333333;">html</div>
<div class="t" style="left:42.70px;top:1003.00px;font:12px 'Liberation Sans', sans-serif;transform:scaleX(0.9604);color:#333333;">body</div>
<div class="t" style="left:82.00px;top:1003.00px;font:12px 'Liberation Sans', sans-serif;transform:scaleX(0.9178);color:#333333;">#wrap</div>
<div class="t" style="left:126.50px;top:1003.00px;font:12px 'Liberation Sans', sans-serif;transform:scaleX(0.8974);color:#333333;">#wrapBox</div>
<div class="t" style="left:188.00px;top:1003.00px;font:12px 'Liberation Sans', sans-serif;transform:scaleX(0.9580);color:#333333;">div</div>
<div class="t" style="left:217.00px;top:1003.00px;font:12px 'Liberation Sans', sans-serif;transform:scaleX(0.9129);color:#333333;">#wrapWide</div>
<div class="t" style="left:286.50px;top:1003.00px;font:12px 'Liberation Sans', sans-serif;transform:scaleX(0.9385);color:#333333;">div</div>
<div class="t" style="left:314.50px;top:1003.00px;font:12px 'Liberation Sans', sans-serif;transform:scaleX(0.8993);color:#333333;">section</div>
<div class="t" style="left:363.40px;top:1003.00px;font:12px 'Liberation Sans', sans-serif;transform:scaleX(0.9385);color:#333333;">div</div>
<div class="t" style="left:391.50px;top:1003.00px;font:12px 'Liberation Sans', sans-serif;transform:scaleX(0.9058);color:#333333;">article</div>
<div class="t" style="left:434.90px;top:1003.00px;font:12px 'Liberation Sans', sans-serif;transform:scaleX(0.9090);color:#333333;">div.post.Standard</div>
<div class="t" style="left:533.30px;top:1003.00px;font:12px 'Liberation Sans', sans-serif;transform:scaleX(0.8727);color:#333333;">div.sc_section</div>
<div class="t" style="left:613.00px;top:1003.00px;font:12px 'Liberation Sans', sans-serif;transform:scaleX(0.8585);color:#333333;">div.sc_skills.sc_skills_bar.sc_skills_horizontal</div>
<div class="t" style="left:833.70px;top:1003.00px;font:12px 'Liberation Sans', sans-serif;transform:scaleX(0.8715);color:#333333;">div.sc_skills_item.sc_skills_style_1.odd.first.inited</div>
<div class="t" style="left:1076.70px;top:1003.00px;font:12px 'Liberation Sans', sans-serif;transform:scaleX(0.8717);color:#ffffff;">div.sc_skills_count.sc_skills_count_init</div>
<div style="position:absolute;left:1368px;top:704px;width:533px;height:26px;background:#f3f3f3;"></div>
<div style="position:absolute;left:1368px;top:730px;width:533px;height:1px;background:#cccccc;"></div>
<div style="position:absolute;left:1373px;top:706px;width:40px;height:24px;background:#fff;border:1px solid #cccccc;border-bottom:none;box-sizing:border-box"></div>
<div class="t" style="left:1378.00px;top:712.00px;font:12px 'Liberation Sans', sans-serif;transform:scaleX(0.9331);color:#303030;">Styles</div>
<div class="t" style="left:1419.00px;top:712.00px;font:12px 'Liberation Sans', sans-serif;transform:scaleX(1.0023);color:#303030;">Computed</div>
<div class="t" style="left:1486.00px;top:712.00px;font:12px 'Liberation Sans', sans-serif;transform:scaleX(0.9430);color:#303030;">Event Listeners</div>
<div class="t" style="left:1575.00px;top:712.00px;font:12px 'Liberation Sans', sans-serif;transform:scaleX(0.9862);color:#303030;">DOM Breakpoints</div>
<div class="t" style="left:1679.30px;top:712.00px;font:12px 'Liberation Sans', sans-serif;transform:scaleX(0.9689);color:#303030;">Properties</div>
<div style="position:absolute;left:1368px;top:731px;width:533px;height:26px;background:#ffffff;"></div>
<div class="t" style="left:1372.60px;top:737.60px;font:12px 'Liberation Sans', sans-serif;transform:scaleX(1.0685);color:#9a9a9a;">Filter</div>
<div style="position:absolute;left:1368px;top:757px;width:533px;height:1px;background:#e6e6e6;"></div>
<svg style="position:absolute;left:1824px;top:738px" width="20" height="16"><path d="M6 1 V10 M1.5 5.5 H10.5" stroke="#404040" stroke-width="1.8"/><path d="M17 9 V14 H12Z" fill="#404040"/></svg>
<svg style="position:absolute;left:1852px;top:736px" width="14" height="17"><path d="M3.5 1 H10.5 V3 H9.5 L9.5 8 L11.5 10 V11 H2.5 V10 L4.5 8 L4.5 3 H3.5Z" fill="#404040"/><path d="M7 11 V16.5" stroke="#404040" stroke-width="1.6"/></svg>
<svg style="position:absolute;left:1877px;top:737px" width="20" height="14"><path d="M11 1.5 L16.5 7 L11 12.5" stroke="#b0b0b0" stroke-width="1.8" fill="none"/><path d="M7 1 L13 7 L7 13 L1 7Z" fill="#404040"/></svg>
<div class="t" style="left:1372.50px;top:762.00px;font:11px 'Liberation Mono', monospace;"><span style="color:#6a6a6a">element.style</span><span style="color:#333"> {</span></div>
<div class="t" style="left:1390.30px;top:778.00px;font:11px 'Liberation Mono', monospace;"><span style="color:#b02a2a">width</span><span style="color:#2a2a2a">: </span><span style="color:#2a2a2a">98%</span><span style="color:#2a2a2a">;</span></div>
<div class="t" style="left:1372.50px;top:792.00px;font:11px 'Liberation Mono', monospace;color:#333;">}</div>
<div style="position:absolute;left:1368px;top:808px;width:533px;height:1px;background:#e6e6e6;"></div>
<div class="t" style="left:1372.50px;top:813.00px;font:11px 'Liberation Mono', monospace;color:#888888;">media=&quot;all&quot;</div>
<div class="t" style="left:1372.50px;top:827.00px;font:11px 'Liberation Mono', monospace;"><span style="color:#2a2a2a">.sc_skills_bar .sc_skills_item .sc_skills_count</span><span style="color:#333"> {</span></div>
<div class="t" style="left:1743.60px;top:813.00px;font:11px 'Liberation Mono', monospace;text-decoration:underline;color:#303030;">features-shortcodes.html</div>
<div class="t" style="left:1783.20px;top:827.50px;font:11px 'Liberation Mono', monospace;text-decoration:underline;color:#303030;">shortcodes.css:654</div>
<div class="t" style="left:1390.30px;top:843.00px;font:11px 'Liberation Mono', monospace;"><span style="color:#b02a2a">text-align</span><span style="color:#2a2a2a">: </span><span style="color:#2a2a2a">right;</span></div>
<div class="t" style="left:1390.30px;top:857.00px;font:11px 'Liberation Mono', monospace;text-decoration:line-through;"><span style="color:#b02a2a">width</span><span style="color:#2a2a2a">: 0;</span></div>
<div class="t" style="left:1390.30px;top:871.00px;font:11px 'Liberation Mono', monospace;"><span style="color:#b02a2a">height</span><span style="color:#2a2a2a">: </span><span style="color:#2a2a2a">10px;</span></div>
<div class="t" style="left:1390.30px;top:885.00px;font:11px 'Liberation Mono', monospace;"><span style="color:#b02a2a">line-height</span><span style="color:#2a2a2a">: </span><span style="color:#2a2a2a">10px;</span></div>
<div style="position:absolute;left:1437.5px;top:899px;width:10px;height:10px;background:#ffffff;border:1px solid #bbb;box-sizing:border-box"></div>
<div class="t" style="left:1390.30px;top:899.00px;font:11px 'Liberation Mono', monospace;"><span style="color:#b02a2a">color</span><span style="color:#2a2a2a">: </span><span style="color:#2a2a2a">  </span><span style="color:#2a2a2a">#fff;</span></div>
<div class="t" style="left:1390.30px;top:913.00px;font:11px 'Liberation Mono', monospace;"><span style="color:#b02a2a">position</span><span style="color:#2a2a2a">: </span><span style="color:#2a2a2a">absolute;</span></div>
<div class="t" style="left:1390.30px;top:927.00px;font:11px 'Liberation Mono', monospace;"><span style="color:#b02a2a">left</span><span style="color:#2a2a2a">: </span><span style="color:#2a2a2a">0px;</span></div>
<div class="t" style="left:1390.30px;top:941.00px;font:11px 'Liberation Mono', monospace;"><span style="color:#b02a2a">top</span><span style="color:#2a2a2a">: </span><span style="color:#2a2a2a">0px;</span></div>
<div class="t" style="left:1390.30px;top:955.00px;font:11px 'Liberation Mono', monospace;"><span style="color:#b02a2a">z-index</span><span style="color:#2a2a2a">: </span><span style="color:#2a2a2a">2;</span></div>
<div style="position:absolute;left:1510.1px;top:969px;width:10px;height:10px;background:#80b500;"></div>
<div class="t" style="left:1390.30px;top:969.00px;font:11px 'Liberation Mono', monospace;"><span style="color:#b02a2a">background-color</span><span style="color:#2a2a2a">: </span><span style="color:#2a2a2a">  </span><span style="color:#2a2a2a">#80b500;</span></div>
<svg style="position:absolute;left:1450.7px;top:983px" width="8" height="9"><path d="M0.5 0.5 L7 4.5 L0.5 8.5Z" fill="#555"/></svg>
<div class="t" style="left:1390.30px;top:983.00px;font:11px 'Liberation Mono', monospace;color:#b02a2a;">overflow</div>
<div class="t" style="left:1443.10px;top:983.00px;font:11px 'Liberation Mono', monospace;color:#2a2a2a;">:</div>
<div class="t" style="left:1460.40px;top:983.00px;font:11px 'Liberation Mono', monospace;color:#2a2a2a;">visible !important;</div>
<div class="t" style="left:1372.50px;top:997.50px;font:11px 'Liberation Mono', monospace;color:#333;">}</div>
<div style="position:absolute;left:1368px;top:1013px;width:533px;height:1px;background:#e6e6e6;"></div>
</body></html>
